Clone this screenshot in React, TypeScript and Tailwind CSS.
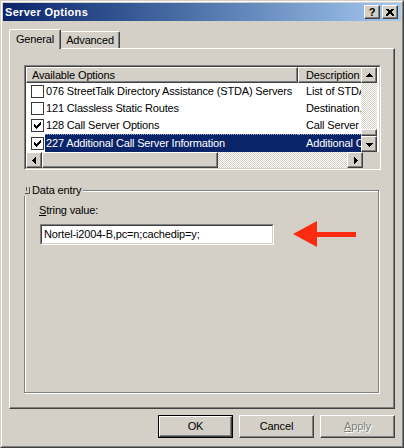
import React from "react";

const raised =
  "border border-t-white border-l-white border-r-[#404040] border-b-[#404040] shadow-[inset_-1px_-1px_#808080]";
const checker =
  "bg-[image:repeating-conic-gradient(#ffffff_0%_25%,#d4d0c8_0%_50%)] bg-[length:2px_2px]";

type Dir = "up" | "down" | "left" | "right";

const Arrow: React.FC<{ dir: Dir }> = ({ dir }) => {
  const rows = [0, 1, 2, 3].map((i) => (
    <rect key={i} x={3 - i} y={i} width={1 + i * 2} height={1} />
  ));
  const rot = { up: 0, down: 180, left: 270, right: 90 }[dir];
  return (
    <svg width="7" height="7" viewBox="0 0 7 7" shapeRendering="crispEdges">
      <g fill="#000" transform={`rotate(${rot} 3.5 3.5) translate(0 1)`}>{rows}</g>
    </svg>
  );
};

const ScrollBtn: React.FC<{ dir: Dir }> = ({ dir }) => (
  <div className={`w-[16px] h-[16px] shrink-0 bg-[#d4d0c8] flex items-center justify-center ${raised}`}>
    <Arrow dir={dir} />
  </div>
);

const Check: React.FC<{ checked: boolean }> = ({ checked }) => (
  <div className="w-[13px] h-[13px] shrink-0 bg-white border border-[#3a3a3a] flex items-center justify-center">
    {checked && (
      <svg width="7" height="7" viewBox="0 0 7 7" shapeRendering="crispEdges" fill="#000">
        <rect x="6" y="0" width="1" height="1" />
        <rect x="5" y="1" width="2" height="1" />
        <rect x="0" y="2" width="1" height="1" />
        <rect x="4" y="2" width="3" height="1" />
        <rect x="0" y="3" width="2" height="1" />
        <rect x="3" y="3" width="3" height="1" />
        <rect x="0" y="4" width="5" height="1" />
        <rect x="1" y="5" width="3" height="1" />
        <rect x="2" y="6" width="1" height="1" />
      </svg>
    )}
  </div>
);

const options = [
  { name: "076 StreetTalk Directory Assistance (STDA) Servers", desc: "List of STDA servers", checked: false },
  { name: "121 Classless Static Routes", desc: "Destination, mask and router", checked: false },
  { name: "128 Call Server Options", desc: "Call Server Options", checked: true },
  { name: "227 Additional Call Server Information", desc: "Additional Call Server", checked: true },
];

const Sunken: React.FC<{ className?: string; children: React.ReactNode }> = ({ className = "", children }) => (
  <div className={`border border-t-[#808080] border-l-[#808080] border-r-white border-b-white ${className}`}>
    <div className="w-full h-full border border-t-[#404040] border-l-[#404040] border-r-[#d4d0c8] border-b-[#d4d0c8] overflow-hidden">
      {children}
    </div>
  </div>
);

const ListView: React.FC = () => (
  <Sunken className="w-[357px] h-[105px]">
    <div className="flex h-[85px] bg-white">
      <div className="w-[335px] overflow-hidden">
        <div className="flex h-[16px] bg-[#d4d0c8]">
          <div className={`w-[272px] shrink-0 pl-[5px] flex items-center ${raised}`}>Available Options</div>
          <div className={`w-[80px] shrink-0 pl-[7px] flex items-center whitespace-nowrap ${raised}`}>Description</div>
        </div>
        {options.map((o, i) => {
          const sel = i === 3;
          return (
            <div key={o.name} className={`flex ${i === 3 ? "h-[18px]" : "h-[17px]"} items-center whitespace-nowrap`}>
              <div className="w-[272px] shrink-0 flex items-center pl-[5px] h-full">
                <Check checked={o.checked} />
                <span
                  className={`ml-[1px] h-full flex-1 flex items-center pl-[1px] ${
                    sel ? "bg-[#0a246a] text-white border-t border-dotted border-[#9aa6c8]" : ""
                  }`}
                >
                  {o.name}
                </span>
              </div>
              <div
                className={`flex-1 h-full flex items-center pl-[8px] ${
                  sel ? "bg-[#0a246a] text-white border-t border-dotted border-[#9aa6c8]" : ""
                }`}
              >
                {o.desc}
              </div>
            </div>
          );
        })}
      </div>
      <div className="w-[16px] flex flex-col">
        <ScrollBtn dir="up" />
        <div className={`flex-1 ${checker}`} />
        <div className={`h-[7px] bg-[#d4d0c8] ${raised}`} />
        <ScrollBtn dir="down" />
      </div>
    </div>
    <div className="flex h-[16px]">
      <ScrollBtn dir="left" />
      <div className={`w-[176px] bg-[#d4d0c8] ${raised}`} />
      <div className={`flex-1 ${checker}`} />
      <ScrollBtn dir="right" />
      <div className="w-[16px] bg-[#d4d0c8]" />
    </div>
  </Sunken>
);

const RedArrow: React.FC = () => (
  <svg width="64" height="26" viewBox="0 0 64 26">
    <polygon points="0,13 24,0 24,11 63,11 63,16 24,16 24,26" fill="#fc2a10" />
  </svg>
);

const Button: React.FC<{ label: React.ReactNode; def?: boolean; disabled?: boolean }> = ({ label, def, disabled }) => (
  <div className={`w-[75px] h-[23px] ${def ? "border border-black" : ""}`}>
    <div
      className={`w-full h-full bg-[#d4d0c8] flex items-center justify-center ${raised} ${
        disabled ? "text-[#808080] [text-shadow:1px_1px_#ffffff]" : ""
      }`}
    >
      {label}
    </div>
  </div>
);

export default function App() {
  return (
    <div className="w-[404px] h-[448px] bg-[#d4d0c8] border border-t-[#d4d0c8] border-l-[#d4d0c8] border-r-[#404040] border-b-[#404040] font-['Liberation_Sans',Arial,sans-serif] text-[11px] tracking-[-0.15px] text-black leading-none select-none">
      <div className="w-full h-full border border-t-white border-l-white border-r-[#808080] border-b-[#808080] p-[1px] flex flex-col">
        {/* title bar */}
        <div className="h-[18px] bg-gradient-to-r from-[#0a246a] to-[#a6caf0] flex items-center pl-[2px] pr-[3px]">
          <span className="text-white font-bold text-[11px] tracking-[0.3px]">Server Options</span>
          <div className="ml-auto flex gap-[2px]">
            <div className={`w-[16px] h-[14px] bg-[#d4d0c8] flex items-center justify-center font-bold text-[11px] ${raised}`}>?</div>
            <div className={`w-[16px] h-[14px] bg-[#d4d0c8] flex items-center justify-center ${raised}`}>
              <svg width="8" height="7" viewBox="0 0 8 7" shapeRendering="crispEdges">
                <path d="M0.5 0 L7.5 7 M1.5 0 L8 6.5 M7.5 0 L0.5 7 M6.5 0 L0 6.5" stroke="#000" strokeWidth="1" />
              </svg>
            </div>
          </div>
        </div>

        {/* tabs */}
        <div className="mt-[8px] px-[6px]">
          <div className="flex items-end h-[19px]">
            <div className="relative z-10 -mb-[1px] w-[52px] h-[20px] bg-[#d4d0c8] border-t border-l border-t-white border-l-white border-r border-r-[#404040] shadow-[inset_-1px_0_#808080] rounded-tl-[2px] rounded-tr-[2px] flex items-center justify-center pb-[1px]">
              General
            </div>
            <div className="w-[59px] h-[17px] bg-[#d4d0c8] border-t border-t-white border-r border-r-[#404040] shadow-[inset_-1px_0_#808080] rounded-tr-[2px] flex items-center justify-center pt-[1px]">
              Advanced
            </div>
          </div>
          <div className="h-[361px] border border-t-white border-l-white border-r-[#404040] border-b-[#404040] shadow-[inset_-1px_-1px_#808080] pl-[14px] pt-[16px]">
            <ListView />

            {/* group box */}
            <div className="relative mt-[20px] w-[355px] h-[203px] border border-[#808080] shadow-[inset_1px_1px_#ffffff,1px_1px_#ffffff] pl-[14px] pt-[14px]">
              <div className="absolute -top-[6px] -left-[1px] flex items-center bg-[#d4d0c8] pr-[2px]">
                <svg width="8" height="9" viewBox="0 0 8 9" shapeRendering="crispEdges">
                  <path d="M2.5 1 V5 M5.5 1 V8 M1 7.5 H6" stroke="#555" strokeWidth="1" fill="none" />
                </svg>
                <span>Data entry</span>
              </div>
              <div>
                <span className="underline">S</span>tring value:
              </div>
              <div className="mt-[5px] ml-[1px] flex items-center">
                <Sunken className="w-[234px] h-[21px]">
                  <div className="h-full bg-white flex items-center pl-[2px] whitespace-nowrap">Nortel-i2004-B,pc=n;cachedip=y;</div>
                </Sunken>
                <div className="ml-[19px] flex">
                  <RedArrow />
                </div>
              </div>
            </div>
          </div>
        </div>

        {/* buttons */}
        <div className="mt-[6px] flex justify-end gap-[6px] pr-[6px]">
          <Button label="OK" def />
          <Button label="Cancel" />
          <Button
            label={
              <span>
                <span className="underline">A</span>pply
              </span>
            }
            disabled
          />
        </div>
      </div>
    </div>
  );
}
